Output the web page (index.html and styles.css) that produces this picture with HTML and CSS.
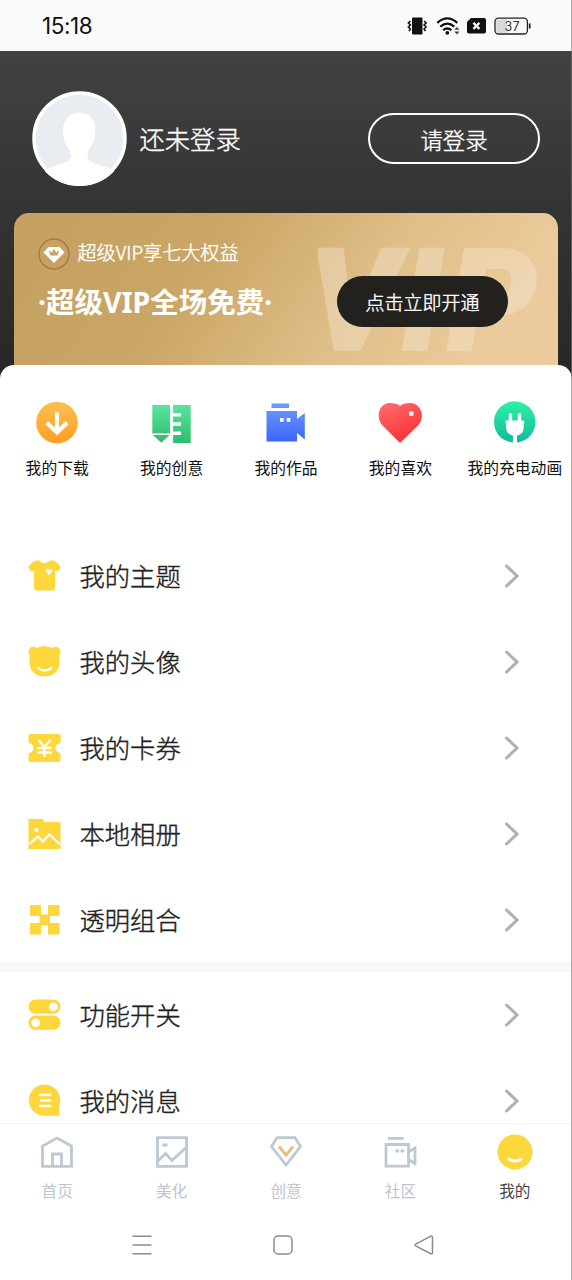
FILE: index.html
```html
<!DOCTYPE html>
<html lang="zh-CN">
<head>
<meta charset="utf-8">
<title>我的</title>
<link rel="stylesheet" href="styles.css">
</head>
<body>
<div class="screen">
  <header class="status">
    <span class="clock">15:18</span>
    <svg class="status-icons" width="126" height="22" viewBox="0 0 126 22">
      <rect x="6" y="2.500" width="10.5" height="17" rx="1" fill="#111"/>
      <path d="M4.400 6 2.400 8 4.400 10 2.400 12 4.400 14 3 16M18.100 6 20.100 8 18.100 10 20.100 12 18.100 14 19.500 16" fill="none" stroke="#111" stroke-width="1.600"/>
      <path d="M31.300 7.800Q41.300-1 51.300 7.800M34.300 11.700Q41.300 5.500 48.300 11.700M37.200 15.200Q41.300 11.800 45.400 15.200" fill="none" stroke="#111" stroke-width="2.300"/>
      <circle cx="41.300" cy="17.800" r="1.900" fill="#111"/>
      <path d="M48.200 14.800 50.900 11.900 53.600 14.800ZM48.200 16.500 50.900 19.400 53.600 16.500Z" fill="#444"/>
      <path d="M61 7 65 3H78Q80 3 80 5V16.500Q80 18.500 78 18.500H63Q61 18.500 61 16.500Z" fill="#111"/>
      <path d="m67.400 7.900 6 6m0-6-6 6" stroke="#fff" stroke-width="2.200"/>
      <rect x="89" y="3.200" width="32.400" height="15.800" rx="3.500" fill="#fafafa" stroke="#222" stroke-width="1.300"/>
      <path d="M92.500 4.500H101V17.700H92.500Q90.200 17.700 90.200 15.500V6.700Q90.200 4.500 92.500 4.500Z" fill="#d8d8d8"/>
      <path d="M123.700 8.500v5" stroke="#222" stroke-width="1.800"/>
      <text class="battery-level" x="98.600" y="15.700">37</text>
    </svg>
  </header>

  <section class="hero">
    <div class="profile">
      <svg class="avatar" width="95" height="95" viewBox="0 0 96 96">
        <circle cx="48" cy="48" r="46.500" fill="#e9edf1"/>
        <path d="M48 22C58 22 64 29 64 39C64 49 61 55 57 60C55 66 56 70 61 72C70 76 78 76 83 81A48 48 0 0 1 13 81C18 76 26 76 34 72C39 70 41 66 38 60C34 55 31.500 49 31.500 39C31.500 29 38 22 48 22Z" fill="#fff"/>
        <circle cx="48" cy="48" r="46" fill="none" stroke="#fff" stroke-width="3.500"/>
      </svg>
      <span class="nickname">还未登录</span>
      <a class="login">请登录</a>
    </div>
    <div class="vip">
      <svg class="vip-mark" width="230" height="120" viewBox="0 0 230 120">
        <text x="-10 83 129" y="110">VIP</text>
      </svg>
      <div class="vip-copy">
        <div class="vip-sub">
          <svg width="32" height="32" viewBox="0 0 32 32">
            <circle cx="16" cy="16" r="15" fill="none" stroke="#a57941" stroke-width="1.400"/>
            <path d="M10.500 9H21.500L26.500 14.500 16 25 5.500 14.500Z" fill="#fff"/>
            <path d="m10.800 12 1.500 5.500h7.400l1.500-5.500-3 2.700-2.200-4-2.200 4Z" fill="#c6a065"/>
          </svg>
          <span>超级VIP享七大权益</span>
        </div>
        <div class="vip-title">·超级VIP全场免费·</div>
      </div>
      <a class="vip-open">点击立即开通</a>
    </div>
  </section>

  <main class="sheet">
    <svg class="defs" width="0" height="0">
      <linearGradient id="orange" x2="0" y2="1"><stop stop-color="#fcc04f"/><stop offset="1" stop-color="#ff9f25"/></linearGradient>
      <linearGradient id="green" x2="0" y2="1"><stop stop-color="#5be4a0"/><stop offset="1" stop-color="#2dbd6b"/></linearGradient>
      <linearGradient id="blue" x2="0" y2="1"><stop stop-color="#6f9dfc"/><stop offset="1" stop-color="#3d64fa"/></linearGradient>
      <linearGradient id="red" x2=".5" y2="1"><stop stop-color="#ff6d70"/><stop offset="1" stop-color="#fb3338"/></linearGradient>
      <linearGradient id="teal" x2="0" y2="1"><stop stop-color="#2cf3a4"/><stop offset="1" stop-color="#14b89c"/></linearGradient>
    </svg>
    <nav class="quick">
      <a class="quick-item">
        <svg width="48" height="48" viewBox="0 0 48 48">
          <circle cx="24" cy="23.500" r="20.800" fill="url(#orange)"/>
          <path d="M24 13.500V33M13.800 23.800 24 33.300 34.200 23.800" fill="none" stroke="#fff" stroke-width="4.200"/>
        </svg>
        <span>我的下载</span>
      </a>
      <a class="quick-item">
        <svg width="48" height="48" viewBox="0 0 48 48">
          <path d="M4.300 6H22.100V34.500H4.300ZM4.800 36H21.700L13.200 43.800ZM25.100 6H42.700V44H25.100V36H33.100V32.600H25.100V26.700H33.100V23.300H25.100V17.400H33.100V14H25.100Z" fill="url(#green)"/>
        </svg>
        <span>我的创意</span>
      </a>
      <a class="quick-item">
        <svg width="48" height="48" viewBox="0 0 48 48">
          <path d="M9.500 4.500H27V9H9.500ZM4.500 12H35V20L42.800 14V40.500L35 34V42.400H4.500Z" fill="url(#blue)"/>
          <path d="M18 19h3.700v3.700h-3.700zM24.700 19h3.700v3.700h-3.700z" fill="#fff"/>
        </svg>
        <span>我的作品</span>
      </a>
      <a class="quick-item">
        <svg width="48" height="48" viewBox="0 0 48 48">
          <path d="M24 44 6.500 26.500C-1 18 3 4 14 4C18 4 21.500 4.800 24 7C26.500 4.800 30 4 34 4C45 4 50 18 42 26.500Z" fill="url(#red)"/>
          <rect x="33.200" y="12.500" width="4.300" height="4.300" fill="#fff"/>
        </svg>
        <span>我的喜欢</span>
      </a>
      <a class="quick-item">
        <svg width="48" height="48" viewBox="0 0 48 48">
          <circle cx="23.700" cy="23" r="20.700" fill="url(#teal)"/>
          <path d="M17.700 14.500H21.200V21.500H26.700V14.500H30.200V21.500H33.200V24.500H32.700V29Q32 35.500 26 36.500V44H21.900V36.500Q15.500 35.500 15.200 29V24.500H14.700V21.500H17.700Z" fill="#fff"/>
        </svg>
        <span>我的充电动画</span>
      </a>
    </nav>

    <div class="list">
      <a class="row">
        <svg class="row-icon" width="36" height="36" viewBox="0 0 36 36">
          <path d="M10 2.500H13Q18.500 7.500 24 2.500H27Q32 4 34.500 9.500Q34 12.500 31 13.500L29 13V30Q29 32.500 26.500 32.500H10.500Q8 32.500 8 30V13L6 13.500Q3 12.500 2.500 9.500Q5 4 10 2.500Z" fill="#fed73c"/>
          <path d="M23 17 19.800 13.500Q19.500 11 21.500 11L23 12 24.500 11Q26.600 11 26.300 13.500Z" fill="#fff"/>
        </svg>
        <span class="row-label">我的主题</span>
        <svg class="chevron" width="16" height="26" viewBox="0 0 16 26"><path d="M2.500 3 13 13 2.500 23"/></svg>
      </a>
      <a class="row">
        <svg class="row-icon" width="36" height="36" viewBox="0 0 36 36">
          <g fill="#fed73c"><circle cx="7.500" cy="7.800" r="5"/><circle cx="29.500" cy="7.800" r="5"/><path d="M5 8Q12 2 18.500 2T32 8Q34 13 33.700 18.500C33 28 27 32.500 18.500 32.500S4 28 3.500 18.500Q3 13 5 8Z"/></g>
          <path d="M11.500 23.500Q18.500 29.500 26 23.500" fill="none" stroke="#fff" stroke-width="2.300"/>
        </svg>
        <span class="row-label">我的头像</span>
        <svg class="chevron" width="16" height="26" viewBox="0 0 16 26"><path d="M2.500 3 13 13 2.500 23"/></svg>
      </a>
      <a class="row">
        <svg class="row-icon" width="36" height="36" viewBox="0 0 36 36">
          <path d="M3.500 4H33.500L34.500 5V13A5 5 0 0 0 34.500 23V31L33.500 32H3.500L2.500 31V23A5 5 0 0 0 2.500 13V5Z" fill="#fed73c"/>
          <path d="M12.500 10 18.500 17 24.500 10M11.500 18H25.500M11.500 22.500H25.500M18.500 17V27" fill="none" stroke="#fff" stroke-width="2.400"/>
        </svg>
        <span class="row-label">我的卡券</span>
        <svg class="chevron" width="16" height="26" viewBox="0 0 16 26"><path d="M2.500 3 13 13 2.500 23"/></svg>
      </a>
      <a class="row">
        <svg class="row-icon" width="36" height="36" viewBox="0 0 36 36">
          <path d="M2.500 3H17L18.500 6H34.500V33H2.500Z" fill="#fed73c"/>
          <circle cx="10.500" cy="14" r="2.100" fill="#fff"/>
          <path d="M3.500 28 12 20.500 17 25.500 23.500 18.500 33.500 28" fill="none" stroke="#fff" stroke-width="2.200"/>
        </svg>
        <span class="row-label">本地相册</span>
        <svg class="chevron" width="16" height="26" viewBox="0 0 16 26"><path d="M2.500 3 13 13 2.500 23"/></svg>
      </a>
      <a class="row">
        <svg class="row-icon" width="36" height="36" viewBox="0 0 36 36">
          <path d="M4 3H15V12.500H22V3H33.500V14H24V21H33.500V32.500H22V23.500H15V32.500H4V21H13.500V14H4Z" fill="#fed73c"/>
        </svg>
        <span class="row-label">透明组合</span>
        <svg class="chevron" width="16" height="26" viewBox="0 0 16 26"><path d="M2.500 3 13 13 2.500 23"/></svg>
      </a>
    </div>
    <div class="list list-more">
      <a class="row">
        <svg class="row-icon" width="36" height="36" viewBox="0 0 36 36">
          <rect x="2.500" y="2.500" width="32" height="14.300" rx="7.100" fill="#fed73c"/><rect x="2.500" y="18.500" width="32" height="14.300" rx="7.100" fill="#fed73c"/>
          <circle cx="27.300" cy="9.700" r="4.300" fill="#fff"/><circle cx="9.700" cy="25.700" r="4.300" fill="#fff"/>
        </svg>
        <span class="row-label">功能开关</span>
        <svg class="chevron" width="16" height="26" viewBox="0 0 16 26"><path d="M2.500 3 13 13 2.500 23"/></svg>
      </a>
      <a class="row">
        <svg class="row-icon" width="36" height="36" viewBox="0 0 36 36">
          <path d="M18.500 1.500A15.800 15.800 0 0 1 32.800 24L33.800 32.800H18.500A15.650 15.650 0 0 1 18.500 1.500Z" fill="#fed73c"/>
          <path d="M14 12H24M15 17.500H24M14 23H24" stroke="#fff" stroke-width="2.600" stroke-linecap="round"/>
        </svg>
        <span class="row-label">我的消息</span>
        <svg class="chevron" width="16" height="26" viewBox="0 0 16 26"><path d="M2.500 3 13 13 2.500 23"/></svg>
      </a>
    </div>
  </main>

  <nav class="tabs">
    <a class="tab">
      <svg width="36" height="36" viewBox="0 0 36 36"><path d="M3.500 32.300V12L18 4 32.500 12V32.300ZM13.500 32V20H22.500V32"/></svg>
      <span>首页</span>
    </a>
    <a class="tab">
      <svg width="36" height="36" viewBox="0 0 36 36"><path d="M3.500 3.700H32.500V32.300H3.500ZM4 27 11.500 19.500 18 26.500 32.500 13M8.500 11H13.500"/></svg>
      <span>美化</span>
    </a>
    <a class="tab">
      <svg width="36" height="36" viewBox="0 0 36 36"><path d="M9 3.700H27L32.500 12.500 18 31 3.500 12.500Z"/><path class="tab-accent" d="m11 12.500 7 8.500 7-8.500"/></svg>
      <span>创意</span>
    </a>
    <a class="tab">
      <svg width="36" height="36" viewBox="0 0 36 36"><path d="M6 4.300H21.500M4 10.500H26.500V32.200H4ZM26.500 18 33 14V29.500L26.500 25.500M13.500 17H17M18.500 17H22"/></svg>
      <span>社区</span>
    </a>
    <a class="tab tab-active">
      <svg width="36" height="36" viewBox="0 0 36 36"><circle cx="18" cy="18" r="17.500"/><path d="M12 25.300Q18 28.700 24 25.300"/></svg>
      <span>我的</span>
    </a>
  </nav>

  <footer class="system">
    <svg width="20" height="20" viewBox="0 0 20 20"><path d="M.5 1.200H19.500M.5 10H19.500M.5 18.800H19.500"/></svg>
    <svg width="20" height="20" viewBox="0 0 20 20"><rect x="1" y="1" width="18" height="18" rx="4"/></svg>
    <svg width="20" height="20" viewBox="0 0 20 20"><path d="M1.700 9.100 16.800 1.200Q18.500 .7 18.500 2.500V17.500Q18.500 19.300 16.800 18.700L1.700 10.900Q.5 10 1.700 9.100Z"/></svg>
  </footer>
</div>
</body>
</html>
```

FILE: styles.css
```css
* { box-sizing: border-box; }

body {
  margin: 0;
  background: #fff;
  font-family: "Noto Sans CJK SC", sans-serif;
  color: #222;
}

svg { display: block; flex: none; }

.screen {
  position: relative;
  width: 572px;
  height: 1280px;
  display: flex;
  flex-direction: column;
  overflow: hidden;
}

.screen::after {
  content: "";
  position: absolute;
  top: 0;
  right: 0;
  bottom: 0;
  width: 1px;
  background: rgba(120, 120, 120, .6);
}

.status {
  flex: none;
  height: 51px;
  padding: 0 40px 0 42px;
  display: flex;
  align-items: center;
  justify-content: space-between;
  background: #fafafa;
}

.clock {
  margin-top: 2px;
  font: 22.5px/1 Inter, sans-serif;
  letter-spacing: -.4px;
  color: #111;
}

.battery-level {
  font: 12.5px Inter, sans-serif;
  letter-spacing: .3px;
  fill: #333;
}

.hero {
  flex: none;
  height: 330px;
  padding: 38px 14px 0;
  background: linear-gradient(#424242, #333 50%, #272727);
}

.profile {
  height: 98px;
  padding: 0 18px;
  display: flex;
  align-items: center;
}

/* Light weight with a hairline stroke gives an in-between weight. */
.nickname, .login, .vip-sub, .vip-open, .row-label {
  font-weight: 300;
  -webkit-text-stroke: .4px currentColor;
}

.nickname {
  margin: -1px 0 0 12.5px;
  font-size: 25.3px;
  color: #fff;
}

.login {
  width: 172px;
  height: 51px;
  margin: 0 0 0 auto;
  border: 2px solid #fff;
  border-radius: 26px;
  color: #fff;
  font-size: 22.4px;
  line-height: 48px;
  text-align: center;
}

.vip {
  position: relative;
  height: 168px;
  margin-top: 26px;
  padding: 25px 50px 0 24px;
  display: flex;
  justify-content: space-between;
  border-radius: 15px 15px 0 0;
  background: linear-gradient(125deg, #c6a262 10%, #cba767 35%, #dfbd86 60%, #ebcb9b 85%);
}

.vip-mark {
  position: absolute;
  left: 304px;
  top: 27px;
}

.vip-mark text {
  font: italic 900 142px Roboto, "Liberation Sans", sans-serif;
  fill: #f5e6d2;
  stroke: #f5e6d2;
  stroke-width: 1.5px;
  opacity: .42;
}

.vip-copy, .vip-open { position: relative; }

.vip-sub {
  height: 32px;
  display: flex;
  align-items: center;
  gap: 7.5px;
  color: #fff;
  font-size: 19.1px;
}

.vip-sub span { margin-top: -4px; }

.vip-title {
  margin-top: 13px;
  color: #fff;
  font-family: "Noto Sans", "Noto Sans CJK SC", sans-serif;
  font-size: 28.5px;
  line-height: 39px;
  font-weight: 700;
  white-space: nowrap;
}

.vip-open {
  width: 171px;
  height: 51px;
  margin-top: 38px;
  border-radius: 26px;
  background: #23211d;
  color: #fff;
  font-size: 19px;
  line-height: 51px;
  text-align: center;
}

.sheet {
  position: relative;
  flex: none;
  height: 758px;
  margin-top: -16px;
  overflow: hidden;
  border-radius: 14px 14px 0 0;
  background: #fff;
}

.defs { position: absolute; }

.quick {
  height: 168px;
  padding-top: 34px;
  display: grid;
  grid-template-columns: repeat(5, 1fr);
}

.quick-item {
  display: flex;
  flex-direction: column;
  align-items: center;
  font-size: 15.8px;
  line-height: 24px;
  color: #111;
  white-space: nowrap;
}

.quick-item span { margin-top: 9px; }

.row {
  height: 85.8px;
  padding: 1px 52px 0 26px;
  display: flex;
  align-items: center;
}

.row-label {
  margin: -2px 0 0 17.5px;
  font-size: 25.3px;
}

.chevron { margin-left: auto; }

.chevron path {
  fill: none;
  stroke: #b0b0b0;
  stroke-width: 3;
  stroke-linecap: round;
}

.list-more { border-top: 10px solid #f7f7f7; }

.tabs {
  flex: none;
  height: 87px;
  padding-top: 10px;
  display: grid;
  grid-template-columns: repeat(5, 1fr);
  border-top: 1px solid #f4f4f4;
  background: #fff;
}

.tab {
  display: flex;
  flex-direction: column;
  align-items: center;
  gap: 8px;
  color: #bdc6cd;
  font-size: 15.6px;
  line-height: 24px;
}

.tab path {
  fill: none;
  stroke: #bec8d0;
  stroke-width: 2.8;
}

.tab .tab-accent { stroke: #e9bd78; }

.tab-active { color: #444; }
.tab-active circle { fill: #fed73c; }

.tab-active path {
  stroke: #fff;
  stroke-linecap: round;
}

.system {
  flex: none;
  height: 70px;
  padding: 0 138px 0 132px;
  display: flex;
  align-items: center;
  justify-content: space-between;
}

.system svg {
  fill: none;
  stroke: #8b8b8b;
  stroke-width: 1.5;
}
```
